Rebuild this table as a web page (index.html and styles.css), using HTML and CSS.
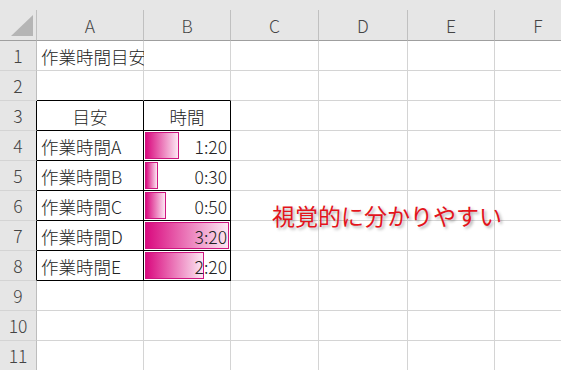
FILE: index.html
```html
<!DOCTYPE html>
<html lang="ja">
<head>
    <meta charset="UTF-8">
    <meta name="viewport" content="width=device-width, initial-scale=1.0">
    <title>作業時間目安</title>
    <link rel="stylesheet" href="styles.css">
</head>
<body>
    <!-- worksheet grid -->
    <div class="sheet">
        <div class="row head">
            <div class="corner">
                <svg width="36" height="30" viewBox="0 0 36 30">
                    <polygon points="33,5 33,26 11,26" fill="#b5b5b5"/>
                </svg>
            </div>
            <div class="col-head">A</div>
            <div class="col-head">B</div>
            <div class="col-head">C</div>
            <div class="col-head">D</div>
            <div class="col-head">E</div>
            <div class="col-head">F</div>
        </div>

        <div class="row">
            <div class="row-head">1</div>
            <div class="cell">作業時間目安</div>
            <div class="cell"></div><div class="cell"></div><div class="cell"></div><div class="cell"></div><div class="cell"></div>
        </div>

        <div class="row">
            <div class="row-head">2</div>
            <div class="cell edge-b"></div>
            <div class="cell edge-b"></div>
            <div class="cell"></div><div class="cell"></div><div class="cell"></div><div class="cell"></div>
        </div>

        <div class="row">
            <div class="row-head edge-r">3</div>
            <div class="cell boxed center">目安</div>
            <div class="cell boxed center">時間</div>
            <div class="cell"></div><div class="cell"></div><div class="cell"></div><div class="cell"></div>
        </div>

        <!-- time rows, bar width = minutes / 200 -->
        <div class="row">
            <div class="row-head edge-r">4</div>
            <div class="cell boxed">作業時間A</div>
            <div class="cell boxed bar-cell">
                <div class="bar" style="width: 40%"></div>
                <span class="val">1:20</span>
            </div>
            <div class="cell"></div><div class="cell"></div><div class="cell"></div><div class="cell"></div>
        </div>

        <div class="row">
            <div class="row-head edge-r">5</div>
            <div class="cell boxed">作業時間B</div>
            <div class="cell boxed bar-cell">
                <div class="bar" style="width: 15%"></div>
                <span class="val">0:30</span>
            </div>
            <div class="cell"></div><div class="cell"></div><div class="cell"></div><div class="cell"></div>
        </div>

        <div class="row">
            <div class="row-head edge-r">6</div>
            <div class="cell boxed">作業時間C</div>
            <div class="cell boxed bar-cell">
                <div class="bar" style="width: 25%"></div>
                <span class="val">0:50</span>
            </div>
            <div class="cell"></div><div class="cell"></div><div class="cell"></div><div class="cell"></div>
        </div>

        <div class="row">
            <div class="row-head edge-r">7</div>
            <div class="cell boxed">作業時間D</div>
            <div class="cell boxed bar-cell">
                <div class="bar" style="width: 100%"></div>
                <span class="val">3:20</span>
            </div>
            <div class="cell"></div><div class="cell"></div><div class="cell"></div><div class="cell"></div>
        </div>

        <div class="row">
            <div class="row-head edge-r">8</div>
            <div class="cell boxed">作業時間E</div>
            <div class="cell boxed bar-cell">
                <div class="bar" style="width: 70%"></div>
                <span class="val">2:20</span>
            </div>
            <div class="cell"></div><div class="cell"></div><div class="cell"></div><div class="cell"></div>
        </div>

        <div class="row">
            <div class="row-head">9</div>
            <div class="cell"></div><div class="cell"></div><div class="cell"></div><div class="cell"></div><div class="cell"></div><div class="cell"></div>
        </div>

        <div class="row">
            <div class="row-head">10</div>
            <div class="cell"></div><div class="cell"></div><div class="cell"></div><div class="cell"></div><div class="cell"></div><div class="cell"></div>
        </div>

        <div class="row">
            <div class="row-head">11</div>
            <div class="cell"></div><div class="cell"></div><div class="cell"></div><div class="cell"></div><div class="cell"></div><div class="cell"></div>
        </div>
    </div>

    <!-- floating text box -->
    <p class="note">視覚的に分かりやすい</p>
</body>
</html>
```

FILE: styles.css
```css
/* page */
body {
    margin: 0;
    width: 561px;
    height: 370px;
    overflow: hidden;
    position: relative;
    font-family: "Noto Sans CJK JP", sans-serif;
    font-size: 17.5px;
    font-weight: 300;
    color: #222;
    background-color: #fff;
}

/* grey strip above the headers */
.sheet {
    padding-top: 10px;
    background-color: #e6e6e6;
}

.row {
    display: grid;
    grid-template-columns: 37px 107px 87px 88px 89px 87px 87px;
    height: 30px;
}

.row > div {
    box-sizing: border-box;
    border-right: 1px solid #d4d4d4;
    border-bottom: 1px solid #d4d4d4;
    display: flex;
    align-items: center;
    white-space: nowrap;
}

/* column letters */
.head {
    height: 31px;
}

.head > div {
    justify-content: center;
    color: #444;
    border-right-color: #c0c0c0;
    border-bottom-color: #9f9f9f;
}

.corner svg {
    display: block;
}

/* row numbers */
.row-head {
    justify-content: center;
    color: #444;
    background-color: #e6e6e6;
    border-right-color: #bdbdbd !important;
}

.cell {
    background-color: #fff;
    padding-left: 4px;
    padding-top: 1px;
}

.center {
    justify-content: center;
    padding-left: 0;
}

/* table borders */
.edge-b {
    border-bottom-color: #000 !important;
}

.edge-r {
    border-right-color: #000 !important;
}

.boxed {
    border-right-color: #000 !important;
    border-bottom-color: #000 !important;
}

/* data bars */
.row > .bar-cell {
    display: grid;
    padding: 1px 1px 1px 1px;
}

.bar,
.val {
    grid-area: 1 / 1;
}

.bar {
    box-sizing: border-box;
    height: 100%;
    border: 1px solid #cf1680;
    background: linear-gradient(to right, #da0a7f, #fce8f3);
}

.val {
    justify-self: end;
    align-self: center;
    padding-right: 2px;
    padding-top: 1px;
}

/* red caption */
.note {
    position: absolute;
    left: 272px;
    top: 204px;
    margin: 0;
    font-size: 23px;
    font-weight: 400;
    line-height: 1;
    color: #e3141c;
    text-shadow: 2px 2px 3px rgba(0, 0, 0, 0.3);
    white-space: nowrap;
}
```
